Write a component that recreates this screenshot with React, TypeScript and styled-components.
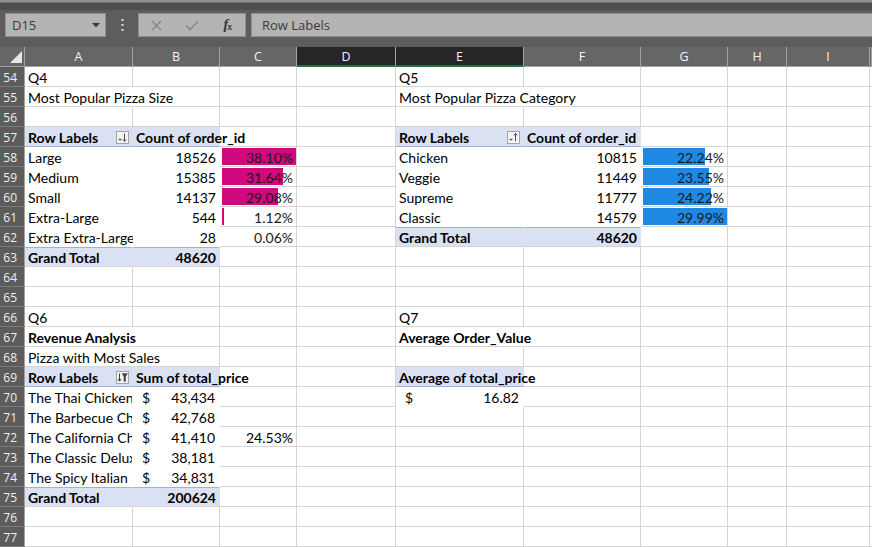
import React from 'react';
import styled, { createGlobalStyle } from 'styled-components';

const GlobalStyle = createGlobalStyle`
  html, body { margin: 0; padding: 0; background: #5d5d5d; overflow: hidden; }
  * { box-sizing: border-box; }
`;

type Col = 'A' | 'B' | 'C' | 'D' | 'E' | 'F' | 'G' | 'H' | 'I' | 'J';
type Kind = 'grid' | 'plain' | 'head' | 'total';
type Align = 'left' | 'right' | 'between';
type SortKind = 'desc' | 'asc' | 'filter';
type Spec = {
  t?: React.ReactNode;
  kind?: Kind;
  align?: Align;
  bold?: boolean;
  spill?: boolean;
  clip?: boolean;
  bar?: { color: string; w: number };
  sort?: SortKind;
  acct?: string;
};

const FILL = '#d9e1f2';
const LINE = '#9fb3d9';
const GRID = '#d5d5d5';
const PINK = '#d0097c';
const BLUE = '#1e88e3';
const CELL_FONT = 'Lato, "Liberation Sans", sans-serif';
const UI_FONT = '"Open Sans", "Noto Sans", sans-serif';

const Window = styled.div`
  width: 872px;
  height: 547px;
  display: flex;
  flex-direction: column;
  background: #5d5d5d;
  overflow: hidden;
`;

const TopStrip = styled.div`
  height: 12px;
  flex: none;
  background: linear-gradient(#8e8e8e 0, #8e8e8e 2px, #4e4e4e 3px, #4e4e4e 9px, #5d5d5d 11px);
`;

const FormulaBar = styled.div`
  height: 35px;
  flex: none;
  display: flex;
  align-items: flex-start;
  padding: 1px 0 0 5px;
`;

const Box = styled.div`
  height: 24px;
  background: #b4b4b4;
  border: 1px solid #8f8f8f;
  display: flex;
  align-items: center;
  font-family: ${UI_FONT};
  font-size: 13px;
  color: #3b3b3b;
`;

const NameBox = styled(Box)`
  width: 101px;
  justify-content: space-between;
  padding: 0 5px 0 6px;
`;

const Grip = styled.div`
  width: 32px;
  height: 24px;
  display: flex;
  align-items: center;
  justify-content: center;
`;

const FxGroup = styled(Box)`
  width: 108px;
  padding: 0;
`;

const FxSlot = styled.span`
  width: 36px;
  height: 22px;
  display: flex;
  align-items: center;
  justify-content: center;
`;

const FxText = styled.span`
  font-family: "Liberation Serif", serif;
  font-style: italic;
  font-weight: 700;
  font-size: 14px;
  color: #333;
  letter-spacing: -1px;
  & sub { font-size: 10px; vertical-align: -1px; }
`;

const FormulaInput = styled(Box)`
  flex: 1;
  margin-left: 5px;
  padding-left: 10px;
  border-right: none;
`;

const Sheet = styled.div`
  flex: 1;
  display: grid;
  grid-template-columns: 25px 108px 87px 77px 99px 128px 117px 87px 59px 83px 2px;
  grid-auto-rows: 20px;
  background: #ffffff;
  overflow: hidden;
`;

const Corner = styled.div`
  background: #666666;
  border-right: 1px solid #a3a3a3;
  border-bottom: 1px solid #a3a3a3;
  display: flex;
  align-items: flex-end;
  justify-content: flex-end;
  padding: 0 2px 3px 0;
`;

const ColHead = styled.div<{ $selected?: boolean }>`
  background: ${p => (p.$selected ? '#262626' : '#666666')};
  border-right: 1px solid #a3a3a3;
  border-bottom: ${p => (p.$selected ? '2px solid #217346' : '1px solid #a3a3a3')};
  color: #f3f3f3;
  font-family: ${UI_FONT};
  font-size: 12.5px;
  display: flex;
  align-items: center;
  justify-content: center;
  padding-top: ${p => (p.$selected ? '1px' : '0')};
`;

const RowHead = styled.div`
  background: #5c5c5c;
  border-right: 1px solid #a3a3a3;
  border-bottom: 1px solid #7b7b7b;
  color: #f0f0f0;
  font-family: ${UI_FONT};
  font-size: 12px;
  display: flex;
  align-items: center;
  justify-content: flex-end;
  padding: 1px 7px 0 0;
`;

const rightBorder = (k: Kind, spill?: boolean) =>
  k === 'head' || k === 'total' ? FILL : k === 'plain' ? 'transparent' : spill ? 'transparent' : GRID;
const bottomBorder = (k: Kind) => (k === 'head' ? LINE : k === 'plain' ? 'transparent' : GRID);

const Cell = styled.div<{
  $kind: Kind;
  $align: Align;
  $bold?: boolean;
  $spill?: boolean;
  $clip?: boolean;
  $bar?: string;
}>`
  position: relative;
  z-index: ${p => (p.$spill ? 1 : 0)};
  display: flex;
  align-items: center;
  justify-content: ${p =>
    p.$align === 'right' ? 'flex-end' : p.$align === 'between' ? 'space-between' : 'flex-start'};
  padding: 2px 3px 0 3px;
  font-family: ${CELL_FONT};
  font-size: 14px;
  font-weight: ${p => (p.$bold ? 700 : 400)};
  color: #000;
  white-space: nowrap;
  overflow: ${p => (p.$clip ? 'hidden' : 'visible')};
  background-color: ${p => (p.$kind === 'head' || p.$kind === 'total' ? FILL : p.$kind === 'plain' ? '#fff' : 'transparent')};
  background-image: ${p => (p.$bar ? `linear-gradient(${p.$bar}, ${p.$bar})` : 'none')};
  background-repeat: no-repeat;
  background-position: 2px 1px;
  border-right: 1px solid ${p => rightBorder(p.$kind, p.$spill)};
  border-bottom: 1px solid ${p => bottomBorder(p.$kind)};
  box-shadow: ${p => (p.$kind === 'total' ? `inset 0 1px 0 ${LINE}` : 'none')};
`;

const BarText = styled.span`
  color: #1a1a1a;
`;

const Dollar = styled.span`
  margin-left: 6px;
`;

const AcctValue = styled.span`
  margin-right: 1px;
`;

const SortBox = styled.span`
  width: 13px;
  height: 13px;
  border: 1px solid #a4a4a4;
  background: #f4f4f4;
  display: flex;
  align-items: center;
  justify-content: center;
  margin-right: 0px;
  margin-top: -1px;
`;

function SortButton({ kind }: { kind: SortKind }) {
  return (
    <SortBox>
      <svg width="11" height="11" viewBox="0 0 11 11">
        {kind === 'filter' ? (
          <g fill="#3d3d3d" stroke="#3d3d3d">
            <line x1="2.5" y1="1.5" x2="2.5" y2="9" strokeWidth="1" />
            <polyline points="0.8,7 2.5,9.2 4.2,7" fill="none" strokeWidth="1" />
            <polygon points="5,1.5 10.5,1.5 8.6,4.5 8.6,9.5 6.9,9.5 6.9,4.5" strokeWidth="0.3" />
          </g>
        ) : (
          <g stroke="#4a4a4a" fill="none" strokeWidth="1">
            <polygon points="1.5,7 4.5,7 3,8.5" fill="#4a4a4a" strokeWidth="0.4" />
            {kind === 'desc' ? (
              <>
                <line x1="7.5" y1="1.5" x2="7.5" y2="9.3" />
                <polyline points="5.8,7.5 7.5,9.3 9.2,7.5" />
              </>
            ) : (
              <>
                <line x1="7.5" y1="1.5" x2="7.5" y2="9.3" />
                <polyline points="5.8,3.3 7.5,1.5 9.2,3.3" />
              </>
            )}
          </g>
        )}
      </svg>
    </SortBox>
  );
}

const pink = (p: number) => ({ color: PINK, w: Math.round((p / 38.1) * 74) });
const blue = (p: number) => ({ color: BLUE, w: Math.round((p / 29.99) * 84) });

const SHEET: Record<number, Partial<Record<Col, Spec>>> = {
  54: { A: { t: 'Q4' }, E: { t: 'Q5' } },
  55: {
    A: { t: 'Most Popular Pizza Size', spill: true },
    E: { t: 'Most Popular Pizza Category', spill: true },
  },
  57: {
    A: { t: 'Row Labels', kind: 'head', bold: true, sort: 'desc' },
    B: { t: 'Count of order_id', kind: 'head', bold: true, spill: true },
    E: { t: 'Row Labels', kind: 'head', bold: true, sort: 'asc' },
    F: { t: 'Count of order_id', kind: 'head', bold: true },
  },
  63: {
    A: { t: 'Grand Total', kind: 'total', bold: true },
    B: { t: '48620', kind: 'total', bold: true, align: 'right' },
  },
  66: { A: { t: 'Q6' }, E: { t: 'Q7' } },
  67: {
    A: { t: 'Revenue Analysis', bold: true, spill: true },
    E: { t: 'Average Order_Value', bold: true, spill: true },
  },
  68: { A: { t: 'Pizza with Most Sales', spill: true } },
  69: {
    A: { t: 'Row Labels', kind: 'head', bold: true, sort: 'filter' },
    B: { t: 'Sum of total_price', kind: 'head', bold: true, spill: true },
    E: { t: 'Average of total_price', kind: 'head', bold: true, spill: true },
  },
  70: { E: { kind: 'plain', acct: '16.82' } },
  75: {
    A: { t: 'Grand Total', kind: 'total', bold: true },
    B: { t: '200624', kind: 'total', bold: true, align: 'right' },
  },
};

const SIZES: [string, string, number][] = [
  ['Large', '18526', 38.1],
  ['Medium', '15385', 31.64],
  ['Small', '14137', 29.08],
  ['Extra-Large', '544', 1.12],
  ['Extra Extra-Large', '28', 0.06],
];
SIZES.forEach(([name, count, pct], i) => {
  const r = 58 + i;
  SHEET[r] = {
    ...(SHEET[r] || {}),
    A: { t: name, kind: 'plain' },
    B: { t: count, kind: 'plain', align: 'right' },
    C: { t: <BarText>{pct.toFixed(2)}%</BarText>, align: 'right', bar: pink(pct) },
  };
});

const CATS: [string, string, number][] = [
  ['Chicken', '10815', 22.24],
  ['Veggie', '11449', 23.55],
  ['Supreme', '11777', 24.22],
  ['Classic', '14579', 29.99],
];
CATS.forEach(([name, count, pct], i) => {
  const r = 58 + i;
  SHEET[r] = {
    ...(SHEET[r] || {}),
    E: { t: name, kind: 'plain' },
    F: { t: count, kind: 'plain', align: 'right' },
    G: { t: <BarText>{pct.toFixed(2)}%</BarText>, align: 'right', bar: blue(pct) },
  };
});
SHEET[62] = {
  ...SHEET[62],
  E: { t: 'Grand Total', kind: 'total', bold: true },
  F: { t: '48620', kind: 'total', bold: true, align: 'right' },
};

const PIZZAS: [string, string][] = [
  ['The Thai Chicken Pizza', '43,434'],
  ['The Barbecue Chicken Pizza', '42,768'],
  ['The California Chicken Pizza', '41,410'],
  ['The Classic Deluxe Pizza', '38,181'],
  ['The Spicy Italian Pizza', '34,831'],
];
PIZZAS.forEach(([name, total], i) => {
  const r = 70 + i;
  SHEET[r] = {
    ...(SHEET[r] || {}),
    A: { t: name, kind: 'plain', clip: true },
    B: { kind: 'plain', acct: total },
  };
});
SHEET[72] = { ...SHEET[72], C: { t: '24.53%', align: 'right' } };

const COLS: Col[] = ['A', 'B', 'C', 'D', 'E', 'F', 'G', 'H', 'I', 'J'];
const ROW_NUMS = Array.from({ length: 24 }, (_, i) => 54 + i);

function SheetCell({ spec }: { spec?: Spec }) {
  const s = spec ?? {};
  const kind = s.kind ?? 'grid';
  const align: Align = s.sort || s.acct ? 'between' : s.align ?? 'left';
  let content: React.ReactNode = s.t;
  if (s.sort) {
    content = (
      <>
        <span>{s.t}</span>
        <SortButton kind={s.sort} />
      </>
    );
  } else if (s.acct) {
    content = (
      <>
        <Dollar>$</Dollar>
        <AcctValue>{s.acct}</AcctValue>
      </>
    );
  }
  return (
    <Cell
      $kind={kind}
      $align={align}
      $bold={s.bold}
      $spill={s.spill}
      $clip={s.clip}
      $bar={s.bar?.color}
      style={s.bar ? { backgroundSize: `${s.bar.w}px 17px` } : undefined}
    >
      {content}
    </Cell>
  );
}

export default function App() {
  return (
    <>
      <GlobalStyle />
      <Window>
        <TopStrip />
        <FormulaBar>
          <NameBox>
            <span>D15</span>
            <svg width="8" height="5" viewBox="0 0 8 5">
              <polygon points="0,0 8,0 4,4.5" fill="#3c3c3c" />
            </svg>
          </NameBox>
          <Grip>
            <svg width="3" height="12" viewBox="0 0 3 12">
              <rect x="0.5" y="0" width="2" height="2" fill="#dcdcdc" />
              <rect x="0.5" y="5" width="2" height="2" fill="#dcdcdc" />
              <rect x="0.5" y="10" width="2" height="2" fill="#dcdcdc" />
            </svg>
          </Grip>
          <FxGroup>
            <FxSlot>
              <svg width="11" height="11" viewBox="0 0 11 11">
                <path d="M1 1 L10 10 M10 1 L1 10" stroke="#858585" strokeWidth="1.3" fill="none" />
              </svg>
            </FxSlot>
            <FxSlot>
              <svg width="14" height="11" viewBox="0 0 14 11">
                <path d="M1 5.5 L5 9.5 L13 1.5" stroke="#858585" strokeWidth="1.4" fill="none" />
              </svg>
            </FxSlot>
            <FxSlot>
              <FxText>
                f<sub>x</sub>
              </FxText>
            </FxSlot>
          </FxGroup>
          <FormulaInput>Row Labels</FormulaInput>
        </FormulaBar>
        <Sheet>
          <Corner>
            <svg width="12" height="12" viewBox="0 0 12 12">
              <polygon points="12,0 12,12 0,12" fill="#e6e6e6" />
            </svg>
          </Corner>
          {COLS.map(c => (
            <ColHead key={c} $selected={c === 'D' || c === 'E'}>
              {c === 'J' ? '' : c}
            </ColHead>
          ))}
          {ROW_NUMS.map(r => (
            <React.Fragment key={r}>
              <RowHead>{r}</RowHead>
              {COLS.map(c => (
                <SheetCell key={c} spec={SHEET[r]?.[c]} />
              ))}
            </React.Fragment>
          ))}
        </Sheet>
      </Window>
    </>
  );
}
